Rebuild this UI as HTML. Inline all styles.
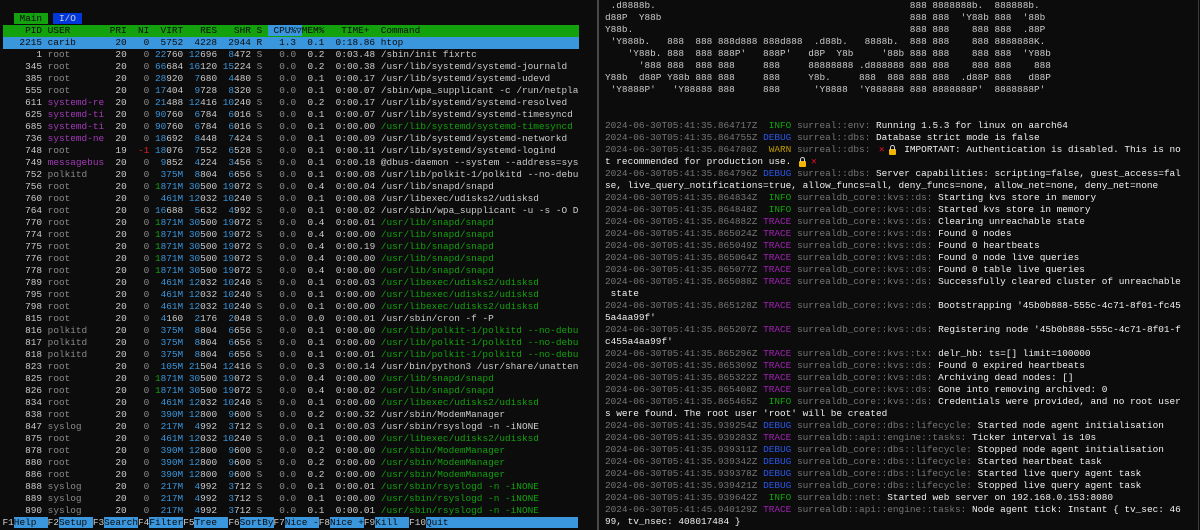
<!DOCTYPE html>
<html><head><meta charset="utf-8"><style>
html,body{margin:0;padding:0;background:#0c0c0c;width:1200px;height:530px;overflow:hidden}
pre{margin:0;font-family:"Liberation Mono","DejaVu Sans Mono",monospace;font-size:9.42px;line-height:12px;position:absolute;top:1px;white-space:pre}
#L{left:2.5px;color:#cccccc}
#R{left:605px;top:0;color:#cccccc}
i,b,u,s,em,q{font-style:normal;font-weight:normal;text-decoration:none}
#L i{color:#8a8a8a} #L b{color:#3a96dd} #L u{color:#13a10e} #L em{color:#a43ab8} #L s{color:#e0202a}
.sel{display:inline-block;width:576px;background:#3a96dd;color:#0c0c0c;vertical-align:top}
.hdr{display:inline-block;width:576px;background:#13a10e;color:#0c0c0c;vertical-align:top}
.hc{background:#3a96dd}
.tri{display:inline-block;width:5.65px;text-align:center;overflow:hidden;vertical-align:top}
.tm{background:#13a10e;color:#0c0c0c}
.ti{background:#0037da;color:#cccccc}
.f{background:#3a96dd;color:#0c0c0c}
#R i{color:#767676}
.in{color:#13a10e}.db{color:#2a55e8}.wn{color:#c19c00}.tr{color:#a020b0}
.m{color:#f0f0f0}
.x{display:inline-block;width:11.3px;color:#e81123;text-align:center;font-weight:bold}
.lk{display:inline-block;width:11.3px;vertical-align:top;position:relative;height:12px}
.lk:before{content:"";position:absolute;left:2px;top:5px;width:7px;height:6px;background:#f2b400;border-radius:1px}
.lk:after{content:"";position:absolute;left:3px;top:1px;width:3px;height:4px;border:1px solid #d0d0d0;border-bottom:none;border-radius:3px 3px 0 0}
#div{position:absolute;left:597px;top:0;width:2px;height:530px;background:#4a4a4a}
#div2{position:absolute;left:1198px;top:0;width:1px;height:530px;background:#3a3a3a}
</style></head><body>
<pre id="L">

  <span class="tm"> Main </span> <span class="ti"> I/O </span>
<span class="hdr">    PID USER       PRI  NI  VIRT   RES   SHR S <span class="hc"> CPU%<span class="tri">▽</span></span>MEM%   TIME+  Command</span>
<span class="sel">   2215 carib       20   0  5752  4228  2944 R   1.3  0.1  0:18.86 htop</span>
      1 <i>root</i>        20   <i>0</i> <b>22</b>760 <b>12</b>696  <b>8</b>472 <i>S</i>   <i>0.0</i>  0.2  0:03.48 /sbin/init fixrtc
    345 <i>root</i>        20   <i>0</i> <b>66</b>684 <b>16</b>120 <b>15</b>224 <i>S</i>   <i>0.0</i>  0.2  0:00.38 /usr/lib/systemd/systemd-journald
    385 <i>root</i>        20   <i>0</i> <b>28</b>920  <b>7</b>680  <b>4</b>480 <i>S</i>   <i>0.0</i>  0.1  0:00.17 /usr/lib/systemd/systemd-udevd
    555 <i>root</i>        20   <i>0</i> <b>17</b>404  <b>9</b>728  <b>8</b>320 <i>S</i>   <i>0.0</i>  0.1  0:00.07 /sbin/wpa_supplicant -c /run/netpla
    611 <em>systemd-re</em>  20   <i>0</i> <b>21</b>488 <b>12</b>416 <b>10</b>240 <i>S</i>   <i>0.0</i>  0.2  0:00.17 /usr/lib/systemd/systemd-resolved
    625 <em>systemd-ti</em>  20   <i>0</i> <b>90</b>760  <b>6</b>784  <b>6</b>016 <i>S</i>   <i>0.0</i>  0.1  0:00.07 /usr/lib/systemd/systemd-timesyncd
    685 <em>systemd-ti</em>  20   <i>0</i> <b>90</b>760  <b>6</b>784  <b>6</b>016 <i>S</i>   <i>0.0</i>  0.1  0:00.00 <u>/usr/lib/systemd/systemd-timesyncd</u>
    736 <em>systemd-ne</em>  20   <i>0</i> <b>18</b>692  <b>8</b>448  <b>7</b>424 <i>S</i>   <i>0.0</i>  0.1  0:00.09 /usr/lib/systemd/systemd-networkd
    748 <i>root</i>        19  <s>-1</s> <b>18</b>076  <b>7</b>552  <b>6</b>528 <i>S</i>   <i>0.0</i>  0.1  0:00.11 /usr/lib/systemd/systemd-logind
    749 <em>messagebus</em>  20   <i>0</i>  <b>9</b>852  <b>4</b>224  <b>3</b>456 <i>S</i>   <i>0.0</i>  0.1  0:00.18 @dbus-daemon --system --address=sys
    752 <i>polkitd</i>     20   <i>0</i>  <b>375M</b>  <b>8</b>804  <b>6</b>656 <i>S</i>   <i>0.0</i>  0.1  0:00.08 /usr/lib/polkit-1/polkitd --no-debu
    756 <i>root</i>        20   <i>0</i> <u>1</u><b>871M</b> <b>30</b>500 <b>19</b>072 <i>S</i>   <i>0.0</i>  0.4  0:00.04 /usr/lib/snapd/snapd
    760 <i>root</i>        20   <i>0</i>  <b>461M</b> <b>12</b>032 <b>10</b>240 <i>S</i>   <i>0.0</i>  0.1  0:00.08 /usr/libexec/udisks2/udisksd
    764 <i>root</i>        20   <i>0</i> <b>16</b>688  <b>5</b>632  <b>4</b>992 <i>S</i>   <i>0.0</i>  0.1  0:00.02 /usr/sbin/wpa_supplicant -u -s -O D
    770 <i>root</i>        20   <i>0</i> <u>1</u><b>871M</b> <b>30</b>500 <b>19</b>072 <i>S</i>   <i>0.0</i>  0.4  0:00.01 <u>/usr/lib/snapd/snapd</u>
    774 <i>root</i>        20   <i>0</i> <u>1</u><b>871M</b> <b>30</b>500 <b>19</b>072 <i>S</i>   <i>0.0</i>  0.4  0:00.00 <u>/usr/lib/snapd/snapd</u>
    775 <i>root</i>        20   <i>0</i> <u>1</u><b>871M</b> <b>30</b>500 <b>19</b>072 <i>S</i>   <i>0.0</i>  0.4  0:00.19 <u>/usr/lib/snapd/snapd</u>
    776 <i>root</i>        20   <i>0</i> <u>1</u><b>871M</b> <b>30</b>500 <b>19</b>072 <i>S</i>   <i>0.0</i>  0.4  0:00.00 <u>/usr/lib/snapd/snapd</u>
    778 <i>root</i>        20   <i>0</i> <u>1</u><b>871M</b> <b>30</b>500 <b>19</b>072 <i>S</i>   <i>0.0</i>  0.4  0:00.00 <u>/usr/lib/snapd/snapd</u>
    789 <i>root</i>        20   <i>0</i>  <b>461M</b> <b>12</b>032 <b>10</b>240 <i>S</i>   <i>0.0</i>  0.1  0:00.03 <u>/usr/libexec/udisks2/udisksd</u>
    795 <i>root</i>        20   <i>0</i>  <b>461M</b> <b>12</b>032 <b>10</b>240 <i>S</i>   <i>0.0</i>  0.1  0:00.00 <u>/usr/libexec/udisks2/udisksd</u>
    798 <i>root</i>        20   <i>0</i>  <b>461M</b> <b>12</b>032 <b>10</b>240 <i>S</i>   <i>0.0</i>  0.1  0:00.00 <u>/usr/libexec/udisks2/udisksd</u>
    815 <i>root</i>        20   <i>0</i>  <b>4</b>160  <b>2</b>176  <b>2</b>048 <i>S</i>   <i>0.0</i>  0.0  0:00.01 /usr/sbin/cron -f -P
    816 <i>polkitd</i>     20   <i>0</i>  <b>375M</b>  <b>8</b>804  <b>6</b>656 <i>S</i>   <i>0.0</i>  0.1  0:00.00 <u>/usr/lib/polkit-1/polkitd --no-debu</u>
    817 <i>polkitd</i>     20   <i>0</i>  <b>375M</b>  <b>8</b>804  <b>6</b>656 <i>S</i>   <i>0.0</i>  0.1  0:00.00 <u>/usr/lib/polkit-1/polkitd --no-debu</u>
    818 <i>polkitd</i>     20   <i>0</i>  <b>375M</b>  <b>8</b>804  <b>6</b>656 <i>S</i>   <i>0.0</i>  0.1  0:00.01 <u>/usr/lib/polkit-1/polkitd --no-debu</u>
    823 <i>root</i>        20   <i>0</i>  <b>105M</b> <b>21</b>504 <b>12</b>416 <i>S</i>   <i>0.0</i>  0.3  0:00.14 /usr/bin/python3 /usr/share/unatten
    825 <i>root</i>        20   <i>0</i> <u>1</u><b>871M</b> <b>30</b>500 <b>19</b>072 <i>S</i>   <i>0.0</i>  0.4  0:00.00 <u>/usr/lib/snapd/snapd</u>
    826 <i>root</i>        20   <i>0</i> <u>1</u><b>871M</b> <b>30</b>500 <b>19</b>072 <i>S</i>   <i>0.0</i>  0.4  0:00.02 <u>/usr/lib/snapd/snapd</u>
    834 <i>root</i>        20   <i>0</i>  <b>461M</b> <b>12</b>032 <b>10</b>240 <i>S</i>   <i>0.0</i>  0.1  0:00.00 <u>/usr/libexec/udisks2/udisksd</u>
    838 <i>root</i>        20   <i>0</i>  <b>390M</b> <b>12</b>800  <b>9</b>600 <i>S</i>   <i>0.0</i>  0.2  0:00.32 /usr/sbin/ModemManager
    847 <i>syslog</i>      20   <i>0</i>  <b>217M</b>  <b>4</b>992  <b>3</b>712 <i>S</i>   <i>0.0</i>  0.1  0:00.03 /usr/sbin/rsyslogd -n -iNONE
    875 <i>root</i>        20   <i>0</i>  <b>461M</b> <b>12</b>032 <b>10</b>240 <i>S</i>   <i>0.0</i>  0.1  0:00.00 <u>/usr/libexec/udisks2/udisksd</u>
    878 <i>root</i>        20   <i>0</i>  <b>390M</b> <b>12</b>800  <b>9</b>600 <i>S</i>   <i>0.0</i>  0.2  0:00.00 <u>/usr/sbin/ModemManager</u>
    880 <i>root</i>        20   <i>0</i>  <b>390M</b> <b>12</b>800  <b>9</b>600 <i>S</i>   <i>0.0</i>  0.2  0:00.00 <u>/usr/sbin/ModemManager</u>
    886 <i>root</i>        20   <i>0</i>  <b>390M</b> <b>12</b>800  <b>9</b>600 <i>S</i>   <i>0.0</i>  0.2  0:00.00 <u>/usr/sbin/ModemManager</u>
    888 <i>syslog</i>      20   <i>0</i>  <b>217M</b>  <b>4</b>992  <b>3</b>712 <i>S</i>   <i>0.0</i>  0.1  0:00.01 <u>/usr/sbin/rsyslogd -n -iNONE</u>
    889 <i>syslog</i>      20   <i>0</i>  <b>217M</b>  <b>4</b>992  <b>3</b>712 <i>S</i>   <i>0.0</i>  0.1  0:00.00 <u>/usr/sbin/rsyslogd -n -iNONE</u>
    890 <i>syslog</i>      20   <i>0</i>  <b>217M</b>  <b>4</b>992  <b>3</b>712 <i>S</i>   <i>0.0</i>  0.1  0:00.01 <u>/usr/sbin/rsyslogd -n -iNONE</u>
F1<span class="f">Help  </span>F2<span class="f">Setup </span>F3<span class="f">Search</span>F4<span class="f">Filter</span>F5<span class="f">Tree  </span>F6<span class="f">SortBy</span>F7<span class="f">Nice -</span>F8<span class="f">Nice +</span>F9<span class="f">Kill  </span>F10<span class="f">Quit                       </span></pre>
<div id="div"></div><div id="div2"></div>
<pre id="R"> .d8888b.                                             888 8888888b.  888888b.
d88P  Y88b                                            888 888  'Y88b 888  '88b
Y88b.                                                 888 888    888 888  .88P
 'Y888b.   888  888 888d888 888d888  .d88b.   8888b.  888 888    888 8888888K.
    'Y88b. 888  888 888P'   888P'   d8P  Y8b     '88b 888 888    888 888  'Y88b
      '888 888  888 888     888     88888888 .d888888 888 888    888 888    888
Y88b  d88P Y88b 888 888     888     Y8b.     888  888 888 888  .d88P 888   d88P
 'Y8888P'   'Y88888 888     888      'Y8888  'Y888888 888 8888888P'  8888888P'


<i>2024-06-30T05:41:35.864717Z</i>  <span class="in">INFO</span> <i>surreal::env:</i> <span class="m">Running 1.5.3 for linux on aarch64</span>
<i>2024-06-30T05:41:35.864755Z</i> <span class="db">DEBUG</span> <i>surreal::dbs:</i> <span class="m">Database strict mode is false</span>
<i>2024-06-30T05:41:35.864780Z</i>  <span class="wn">WARN</span> <i>surreal::dbs:</i> <span class="x">✕</span><span class="lk"></span><span class="m"> IMPORTANT: Authentication is disabled. This is no</span>
<span class="m">t recommended for production use. </span><span class="lk"></span><span class="x">✕</span>
<i>2024-06-30T05:41:35.864796Z</i> <span class="db">DEBUG</span> <i>surreal::dbs:</i> <span class="m">Server capabilities: scripting=false, guest_access=fal</span>
<span class="m">se, live_query_notifications=true, allow_funcs=all, deny_funcs=none, allow_net=none, deny_net=none</span>
<i>2024-06-30T05:41:35.864834Z</i>  <span class="in">INFO</span> <i>surrealdb_core::kvs::ds:</i> <span class="m">Starting kvs store in memory</span>
<i>2024-06-30T05:41:35.864848Z</i>  <span class="in">INFO</span> <i>surrealdb_core::kvs::ds:</i> <span class="m">Started kvs store in memory</span>
<i>2024-06-30T05:41:35.864882Z</i> <span class="tr">TRACE</span> <i>surrealdb_core::kvs::ds:</i> <span class="m">Clearing unreachable state</span>
<i>2024-06-30T05:41:35.865024Z</i> <span class="tr">TRACE</span> <i>surrealdb_core::kvs::ds:</i> <span class="m">Found 0 nodes</span>
<i>2024-06-30T05:41:35.865049Z</i> <span class="tr">TRACE</span> <i>surrealdb_core::kvs::ds:</i> <span class="m">Found 0 heartbeats</span>
<i>2024-06-30T05:41:35.865064Z</i> <span class="tr">TRACE</span> <i>surrealdb_core::kvs::ds:</i> <span class="m">Found 0 node live queries</span>
<i>2024-06-30T05:41:35.865077Z</i> <span class="tr">TRACE</span> <i>surrealdb_core::kvs::ds:</i> <span class="m">Found 0 table live queries</span>
<i>2024-06-30T05:41:35.865088Z</i> <span class="tr">TRACE</span> <i>surrealdb_core::kvs::ds:</i> <span class="m">Successfully cleared cluster of unreachable</span>
<span class="m"> state</span>
<i>2024-06-30T05:41:35.865128Z</i> <span class="tr">TRACE</span> <i>surrealdb_core::kvs::ds:</i> <span class="m">Bootstrapping '45b0b888-555c-4c71-8f01-fc45</span>
<span class="m">5a4aa99f'</span>
<i>2024-06-30T05:41:35.865207Z</i> <span class="tr">TRACE</span> <i>surrealdb_core::kvs::ds:</i> <span class="m">Registering node '45b0b888-555c-4c71-8f01-f</span>
<span class="m">c455a4aa99f'</span>
<i>2024-06-30T05:41:35.865296Z</i> <span class="tr">TRACE</span> <i>surrealdb_core::kvs::tx:</i> <span class="m">delr_hb: ts=[] limit=100000</span>
<i>2024-06-30T05:41:35.865309Z</i> <span class="tr">TRACE</span> <i>surrealdb_core::kvs::ds:</i> <span class="m">Found 0 expired heartbeats</span>
<i>2024-06-30T05:41:35.865322Z</i> <span class="tr">TRACE</span> <i>surrealdb_core::kvs::ds:</i> <span class="m">Archiving dead nodes: []</span>
<i>2024-06-30T05:41:35.865408Z</i> <span class="tr">TRACE</span> <i>surrealdb_core::kvs::ds:</i> <span class="m">Gone into removing archived: 0</span>
<i>2024-06-30T05:41:35.865465Z</i>  <span class="in">INFO</span> <i>surrealdb_core::kvs::ds:</i> <span class="m">Credentials were provided, and no root user</span>
<span class="m">s were found. The root user 'root' will be created</span>
<i>2024-06-30T05:41:35.939254Z</i> <span class="db">DEBUG</span> <i>surrealdb_core::dbs::lifecycle:</i> <span class="m">Started node agent initialisation</span>
<i>2024-06-30T05:41:35.939283Z</i> <span class="tr">TRACE</span> <i>surrealdb::api::engine::tasks:</i> <span class="m">Ticker interval is 10s</span>
<i>2024-06-30T05:41:35.939311Z</i> <span class="db">DEBUG</span> <i>surrealdb_core::dbs::lifecycle:</i> <span class="m">Stopped node agent initialisation</span>
<i>2024-06-30T05:41:35.939342Z</i> <span class="db">DEBUG</span> <i>surrealdb_core::dbs::lifecycle:</i> <span class="m">Started heartbeat task</span>
<i>2024-06-30T05:41:35.939378Z</i> <span class="db">DEBUG</span> <i>surrealdb_core::dbs::lifecycle:</i> <span class="m">Started live query agent task</span>
<i>2024-06-30T05:41:35.939421Z</i> <span class="db">DEBUG</span> <i>surrealdb_core::dbs::lifecycle:</i> <span class="m">Stopped live query agent task</span>
<i>2024-06-30T05:41:35.939642Z</i>  <span class="in">INFO</span> <i>surrealdb::net:</i> <span class="m">Started web server on 192.168.0.153:8080</span>
<i>2024-06-30T05:41:45.940129Z</i> <span class="tr">TRACE</span> <i>surrealdb::api::engine::tasks:</i> <span class="m">Node agent tick: Instant { tv_sec: 46</span>
<span class="m">99, tv_nsec: 408017484 }</span></pre>
</body></html>
